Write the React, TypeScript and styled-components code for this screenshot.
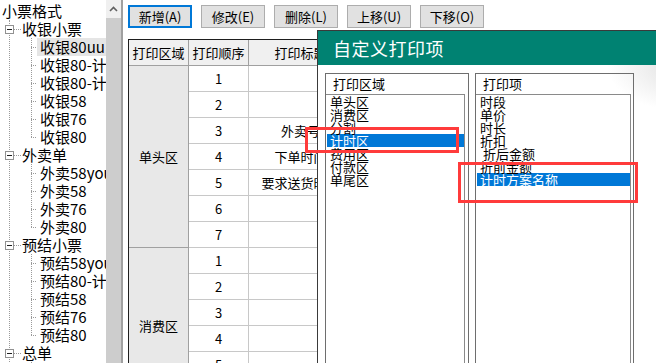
import React from "react";
import styled, { createGlobalStyle } from "styled-components";

const GlobalStyle = createGlobalStyle`
  html, body { margin: 0; padding: 0; background: #fff; overflow: hidden; }
  body { font-family: "Noto Sans CJK SC", "Noto Sans", sans-serif; color: #000; }
  * { box-sizing: border-box; }
`;

const Screen = styled.div`
  position: relative;
  width: 656px;
  height: 363px;
  overflow: hidden;
  display: flex;
  background: #fff;
`;

/* ---------- tree ---------- */
const TreePane = styled.div`
  width: 106px;
  flex: none;
  overflow: hidden;
  padding-top: 2px;
  font-size: 15px;
  line-height: 18px;
  white-space: nowrap;
`;

const RootRow = styled.div`
  height: 18px;
  padding-left: 2px;
`;

const TopList = styled.div`
  margin-left: 9px;
  border-left: 1px dotted #9a9a9a;
`;

const GroupRow = styled.div`
  display: flex;
  align-items: center;
  height: 18px;
  margin-left: -5px;
`;

const ExpandBox = styled.span`
  width: 9px;
  height: 9px;
  flex: none;
  border: 1px solid #919191;
  background: linear-gradient(#1f1f1f, #1f1f1f) center / 5px 1px no-repeat, #fff;
`;

const HDots = styled.span`
  width: 7px;
  height: 1px;
  flex: none;
  background: repeating-linear-gradient(to right, #9a9a9a 0 1px, transparent 1px 2px);
`;

const GroupLabel = styled.span`
  margin-left: 1px;
`;

const ChildRow = styled.div`
  display: flex;
  height: 18px;
`;

const Connector = styled.span<{ $last: boolean }>`
  width: 6px;
  flex: none;
  margin-left: 21px;
  background:
    repeating-linear-gradient(to right, #9a9a9a 0 1px, transparent 1px 2px) 0 9px / 6px 1px no-repeat,
    repeating-linear-gradient(to bottom, #9a9a9a 0 1px, transparent 1px 2px) 0 0 / 1px ${(p) => (p.$last ? "10px" : "100%")} no-repeat;
`;

const ItemLabel = styled.span<{ $selected?: boolean }>`
  padding: 0 2px 0 3px;
  background: ${(p) => (p.$selected ? "#e5e5e5" : "transparent")};
`;

const Scrollbar = styled.div`
  width: 15px;
  flex: none;
  display: flex;
  flex-direction: column;
  background: #cdcdcd;
`;

const ScrollUp = styled.div`
  height: 18px;
  background: #f0f0f0;
  display: flex;
  align-items: center;
  justify-content: center;
`;

const Splitter = styled.div`
  width: 2px;
  flex: none;
  background: #a0a0a0;
`;

/* ---------- main ---------- */
const Main = styled.div`
  flex: 1;
  min-width: 0;
  padding: 5px 0 0 5px;
  display: flex;
  flex-direction: column;
  gap: 11px;
`;

const Toolbar = styled.div`
  display: flex;
  gap: 9px;
`;

const ToolButton = styled.button<{ $focused?: boolean }>`
  width: 64px;
  height: 23px;
  padding: 0;
  border: ${(p) => (p.$focused ? "2px solid #0078d7" : "1px solid #adadad")};
  background: #e1e1e1;
  font-family: "Noto Sans CJK SC", sans-serif;
  font-size: 13px;
  line-height: 1;
  color: #000;
`;

const Grid = styled.div`
  display: grid;
  grid-template-columns: 60px 60px 104px 120px;
  grid-auto-rows: 26px;
  width: max-content;
  border-left: 1px solid #1e1e1e;
  border-top: 1px solid #1e1e1e;
  font-size: 13px;
`;

const HeadCell = styled.div`
  display: flex;
  align-items: center;
  justify-content: center;
  background: #f0f0f0;
  border-right: 1px solid #a0a0a0;
  border-bottom: 1px solid #a0a0a0;
`;

const AreaCell = styled.div<{ $rows: number }>`
  grid-row: span ${(p) => p.$rows};
  display: flex;
  align-items: center;
  justify-content: center;
  background: #e8e8e8;
  border-right: 1px solid #a0a0a0;
  border-bottom: 1px solid #a0a0a0;
`;

const Cell = styled.div<{ $col?: number }>`
  ${(p) => (p.$col ? `grid-column: ${p.$col};` : "")}
  display: flex;
  align-items: center;
  justify-content: center;
  white-space: nowrap;
  overflow: hidden;
  border-right: 1px solid #c8c8c8;
  border-bottom: 1px solid #c8c8c8;
`;

/* ---------- dialog ---------- */
const Dialog = styled.div`
  position: absolute;
  left: 317px;
  top: 30px;
  width: 360px;
  height: 345px;
  display: flex;
  flex-direction: column;
  background: #fff;
  border: 1px solid #3a3a3a;
  border-right: none;
`;

const TitleBar = styled.div`
  height: 34px;
  flex: none;
  display: flex;
  align-items: center;
  padding-left: 15px;
  background: #008272;
  color: #fff;
  font-size: 18px;
  letter-spacing: 0.5px;
`;

const DialogBody = styled.div`
  flex: 1;
  display: flex;
  gap: 6px;
  padding: 8px 0 0 7px;
  background: radial-gradient(70px 45px at 100% 0, #e2e2e2, rgba(255, 255, 255, 0)), #fff;
`;

const Panel = styled.div<{ $w: number }>`
  width: ${(p) => p.$w}px;
  flex: none;
  display: flex;
  flex-direction: column;
  border: 1px solid #6e6e6e;
`;

const PanelLabel = styled.div`
  height: 20px;
  line-height: 20px;
  padding-left: 7px;
  font-size: 13px;
`;

const ListBox = styled.div<{ $gap: number }>`
  flex: 1;
  margin-right: ${(p) => p.$gap}px;
  border-top: 1px solid #8a8a8a;
  border-right: 1px solid #8a8a8a;
  font-size: 13px;
`;

const ListItem = styled.div<{ $selected?: boolean }>`
  height: 13px;
  line-height: 13px;
  margin-left: 1px;
  padding-left: 3px;
  white-space: pre;
  background: ${(p) => (p.$selected ? "#0078d7" : "transparent")};
  color: ${(p) => (p.$selected ? "#fff" : "#000")};
`;

const Annotation = styled.div<{ $x: number; $y: number; $w: number; $h: number }>`
  position: absolute;
  left: ${(p) => p.$x}px;
  top: ${(p) => p.$y}px;
  width: ${(p) => p.$w}px;
  height: ${(p) => p.$h}px;
  border: 3px solid #ff3b3b;
  pointer-events: none;
`;

type Group = { name: string; items: string[] };

const tree: Group[] = [
  { name: "收银小票", items: ["收银80uu", "收银80-计时", "收银80-计时", "收银58", "收银76", "收银80"] },
  { name: "外卖单", items: ["外卖58you", "外卖58", "外卖76", "外卖80"] },
  { name: "预结小票", items: ["预结58you", "预结80-计时", "预结58", "预结76", "预结80"] },
  { name: "总单", items: ["总单80", "总单58"] },
];

const tableGroups = [
  { area: "单头区", titles: ["", "", "外卖号", "下单时间", "要求送货时间", "", ""] },
  { area: "消费区", titles: ["", "", "", "", "", ""] },
];

const areas = ["单头区", "消费区", "分割", "计时区", "费用区", "付款区", "单尾区"];
const items = ["时段", "单价", "时长", "折扣", " 折后金额", "折前金额", "计时方案名称"];

export default function App() {
  return (
    <Screen>
      <GlobalStyle />
      <TreePane>
        <RootRow>小票格式</RootRow>
        <TopList>
          {tree.map((g) => (
            <div key={g.name}>
              <GroupRow>
                <ExpandBox />
                <HDots />
                <GroupLabel>{g.name}</GroupLabel>
              </GroupRow>
              {g.items.map((it, i) => (
                <ChildRow key={i}>
                  <Connector $last={i === g.items.length - 1} />
                  <ItemLabel $selected={g.name === "收银小票" && i === 0}>{it}</ItemLabel>
                </ChildRow>
              ))}
            </div>
          ))}
        </TopList>
      </TreePane>
      <Scrollbar>
        <ScrollUp>
          <svg width="9" height="6" viewBox="0 0 9 6">
            <polyline points="1,5 4.5,1.5 8,5" fill="none" stroke="#606060" strokeWidth="1.6" />
          </svg>
        </ScrollUp>
      </Scrollbar>
      <Splitter />
      <Main>
        <Toolbar>
          <ToolButton $focused>新增(A)</ToolButton>
          <ToolButton>修改(E)</ToolButton>
          <ToolButton>删除(L)</ToolButton>
          <ToolButton>上移(U)</ToolButton>
          <ToolButton>下移(O)</ToolButton>
        </Toolbar>
        <Grid>
          <HeadCell>打印区域</HeadCell>
          <HeadCell>打印顺序</HeadCell>
          <HeadCell>打印标题</HeadCell>
          <HeadCell>打印内容</HeadCell>
          {tableGroups.map((g) => (
            <React.Fragment key={g.area}>
              <AreaCell $rows={g.titles.length}>{g.area}</AreaCell>
              {g.titles.map((t, i) => (
                <React.Fragment key={i}>
                  <Cell $col={2}>{i + 1}</Cell>
                  <Cell>{t}</Cell>
                  <Cell />
                </React.Fragment>
              ))}
            </React.Fragment>
          ))}
        </Grid>
      </Main>

      <Dialog>
        <TitleBar>自定义打印项</TitleBar>
        <DialogBody>
          <Panel $w={144}>
            <PanelLabel>打印区域</PanelLabel>
            <ListBox $gap={3}>
              {areas.map((a) => (
                <ListItem key={a} $selected={a === "计时区"}>{a}</ListItem>
              ))}
            </ListBox>
          </Panel>
          <Panel $w={159}>
            <PanelLabel>打印项</PanelLabel>
            <ListBox $gap={2}>
              {items.map((a) => (
                <ListItem key={a} $selected={a === "计时方案名称"}>{a}</ListItem>
              ))}
            </ListBox>
          </Panel>
        </DialogBody>
      </Dialog>

      <Annotation $x={305} $y={127} $w={154} $h={26} />
      <Annotation $x={458} $y={162} $w={180} $h={41} />
    </Screen>
  );
}
